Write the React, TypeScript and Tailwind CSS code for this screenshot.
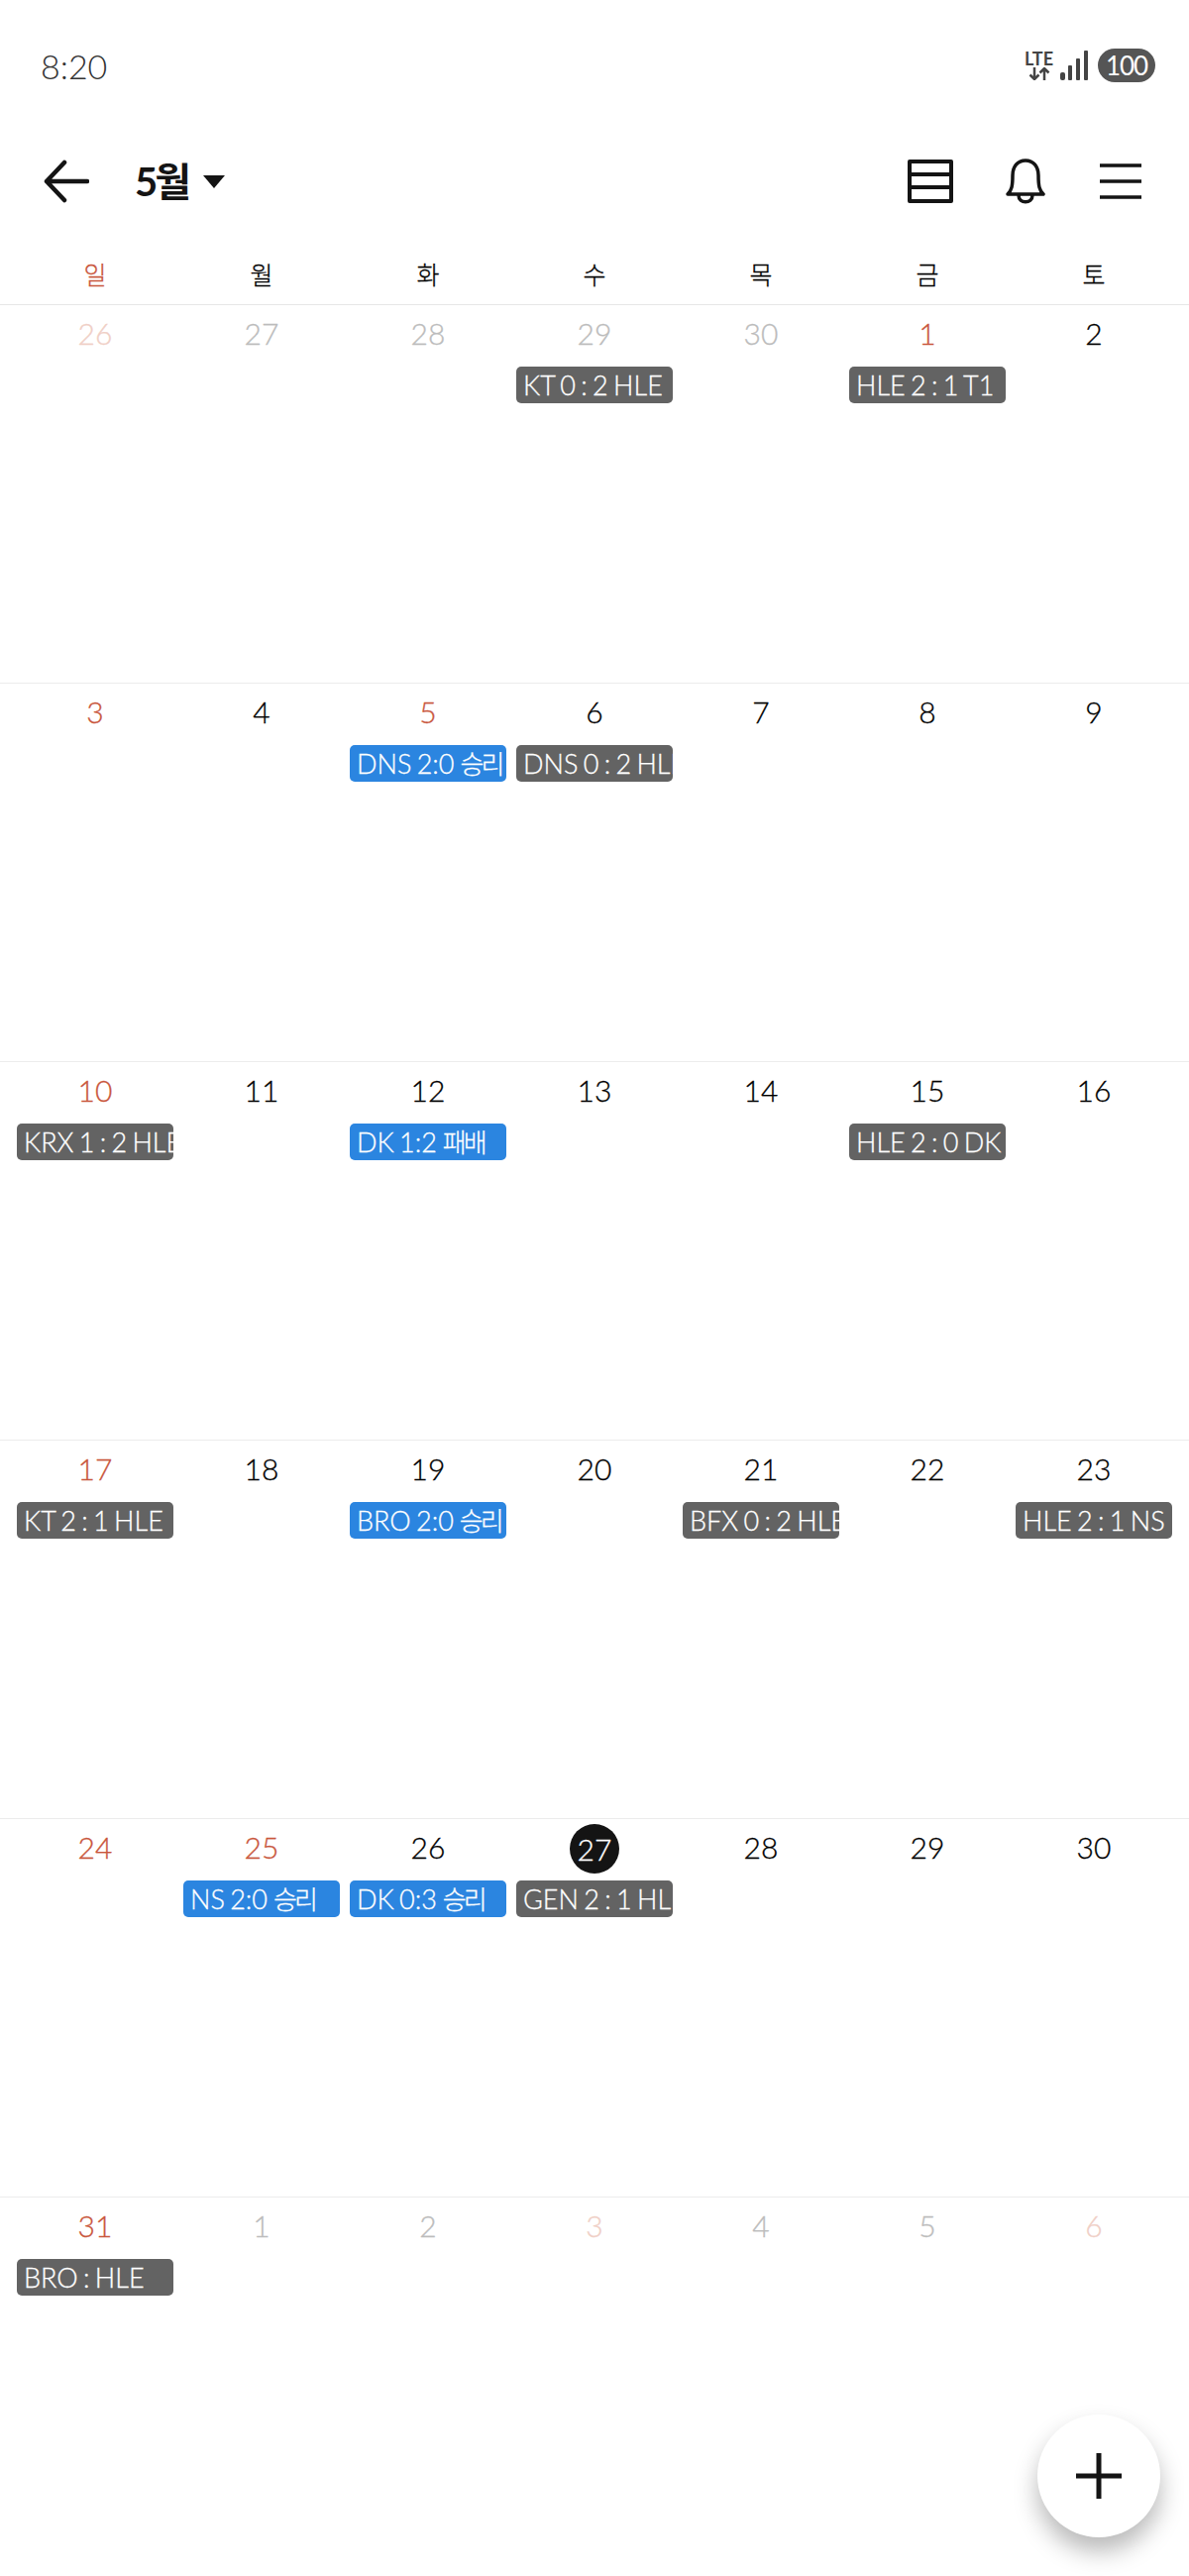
const RED = "text-[#c9563c]";
const PALE = "text-[#f0cfc6]";
const MUTED = "text-[#bcbcbc]";
const BLACK = "text-[#000000]";

type Day = {
  n: number;
  color?: string;
  today?: boolean;
  chip?: string;
  result?: string;
};

const weekdays = ["일", "월", "화", "수", "목", "금", "토"];

const weeks: Day[][] = [
  [
    { n: 26, color: PALE },
    { n: 27, color: MUTED },
    { n: 28, color: MUTED },
    { n: 29, color: MUTED, chip: "KT 0 : 2 HLE" },
    { n: 30, color: MUTED },
    { n: 1, color: RED, chip: "HLE 2 : 1 T1" },
    { n: 2 },
  ],
  [
    { n: 3, color: RED },
    { n: 4 },
    { n: 5, color: RED, chip: "DNS 2:0", result: "승리" },
    { n: 6, chip: "DNS 0 : 2 HLE" },
    { n: 7 },
    { n: 8 },
    { n: 9 },
  ],
  [
    { n: 10, color: RED, chip: "KRX 1 : 2 HLE" },
    { n: 11 },
    { n: 12, chip: "DK 1:2", result: "패배" },
    { n: 13 },
    { n: 14 },
    { n: 15, chip: "HLE 2 : 0 DK" },
    { n: 16 },
  ],
  [
    { n: 17, color: RED, chip: "KT 2 : 1 HLE" },
    { n: 18 },
    { n: 19, chip: "BRO 2:0", result: "승리" },
    { n: 20 },
    { n: 21, chip: "BFX 0 : 2 HLE" },
    { n: 22 },
    { n: 23, chip: "HLE 2 : 1 NS" },
  ],
  [
    { n: 24, color: RED },
    { n: 25, color: RED, chip: "NS 2:0", result: "승리" },
    { n: 26, chip: "DK 0:3", result: "승리" },
    { n: 27, today: true, chip: "GEN 2 : 1 HLE" },
    { n: 28 },
    { n: 29 },
    { n: 30 },
  ],
  [
    { n: 31, color: RED, chip: "BRO : HLE" },
    { n: 1, color: MUTED },
    { n: 2, color: MUTED },
    { n: 3, color: PALE },
    { n: 4, color: MUTED },
    { n: 5, color: MUTED },
    { n: 6, color: PALE },
  ],
];

function DayCell({ day }: { day: Day }) {
  return (
    <div className="min-w-0 flex flex-col items-center">
      <div className="h-[62px] pb-[2px] flex items-center justify-center">
        {day.today ? (
          <div className="w-[50px] h-[50px] rounded-full bg-[#141414] text-white flex items-center justify-center text-[30px] font-light [-webkit-text-stroke:0.3px]">
            {day.n}
          </div>
        ) : (
          <span className={`mb-[3px] text-[30px] font-light [-webkit-text-stroke:0.3px] ${day.color ?? BLACK}`}>
            {day.n}
          </span>
        )}
      </div>
      {day.chip && (
        <div
          className={`w-[158px] h-[37px] rounded-[5px] overflow-hidden whitespace-nowrap pl-[7px] text-white text-[27px] leading-[38px] font-light [word-spacing:-2px] [-webkit-text-stroke:0.3px] ${
            day.result ? "bg-[#2b85e0]" : "bg-[#636363]"
          }`}
        >
          {day.chip}
          {day.result && (
            <span className="ml-[6px] text-[26px] tracking-[-3px]">{day.result}</span>
          )}
        </div>
      )}
    </div>
  );
}

export default function App() {
  return (
    <div className="relative w-[1200px] h-[2600px] overflow-hidden bg-white font-['Lato','Noto_Sans_CJK_KR',sans-serif]">
      {/* 상태바 */}
      <div className="h-[134px] pl-[41px] pr-[34px] pb-[2px] flex items-center justify-between">
        <span className="text-[34px] text-[#333333] font-light">8:20</span>
        <div className="flex items-center gap-[7px]">
          <div className="flex flex-col items-center text-[#444444]">
            <span className="text-[18px] leading-[17px] font-bold">LTE</span>
            <svg width="22" height="13" viewBox="0 0 22 13" fill="none" stroke="#444444" strokeWidth="2.500">
              <path d="M6 0v12M1.500 7.500 6 12l4.500-4.500M16 13V1M11.500 5.500 16 1l4.500 4.500" />
            </svg>
          </div>
          <svg width="28" height="30" viewBox="0 0 28 30" fill="#444444">
            <rect x="0" y="22" width="5" height="8" rx="2" />
            <rect x="8" y="15" width="4" height="15" rx="1" />
            <rect x="16" y="8" width="4" height="22" rx="1" />
            <rect x="24" y="0" width="4" height="30" rx="1" />
          </svg>
          <div className="ml-[3px] w-[58px] h-[34px] rounded-full bg-[#555555] text-white text-[26px] tracking-[-1px] flex items-center justify-center">
            100
          </div>
        </div>
      </div>

      {/* 헤더 */}
      <div className="h-[98px] pl-[44px] pr-[48px] flex items-center justify-between">
        <div className="flex items-center">
          <svg width="46" height="44" viewBox="0 0 46 44" fill="none" stroke="#141414" strokeWidth="4.500" strokeLinecap="round" strokeLinejoin="round">
            <path d="M44 22H3M21 3 3 22l18 19" />
          </svg>
          <span className="ml-[46px] text-[40px] font-bold text-[#141414] tracking-[-3px]">5월</span>
          <svg className="ml-[15px]" width="22" height="13" viewBox="0 0 22 13" fill="#141414">
            <path d="M0 0h22L11 13z" />
          </svg>
        </div>
        <div className="flex items-center gap-[53px]">
          <svg width="46" height="44" viewBox="0 0 46 44" fill="none" stroke="#141414" strokeWidth="4" strokeLinejoin="round">
            <path d="M2 2h42v40H2zM2 15h42M2 28h42" />
          </svg>
          <svg width="40" height="46" viewBox="0 0 40 46" fill="none" stroke="#141414" strokeWidth="3.500" strokeLinejoin="round">
            <path d="M2 36c4-4 5-8 5-19C7 8 12 2 20 2s13 6 13 15c0 11 1 15 5 19zM13 37c0 9 14 9 14 0" />
          </svg>
          <svg className="ml-[2px]" width="42" height="36" viewBox="0 0 42 36" fill="none" stroke="#141414" strokeWidth="3.500">
            <path d="M0 2h42M0 18h42M0 34h42" />
          </svg>
        </div>
      </div>

      {/* 요일 */}
      <div className="h-[76px] px-3 pt-[16px] grid grid-cols-7 items-center border-b border-[#e6e6e6]">
        {weekdays.map((d, i) => (
          <div key={d} className={`text-center text-[25px] font-light [-webkit-text-stroke:0.3px] ${i === 0 ? RED : BLACK}`}>
            {d}
          </div>
        ))}
      </div>

      {/* 달력 */}
      {weeks.map((week, i) => (
        <div
          key={i}
          className={`h-[382px] px-3 grid grid-cols-7 content-start ${
            i < weeks.length - 1 ? "border-b border-[#ececec]" : ""
          }`}
        >
          {week.map((day, j) => (
            <DayCell key={j} day={day} />
          ))}
        </div>
      ))}

      {/* 추가 버튼 */}
      <button className="absolute right-[29px] bottom-[39px] w-[124px] h-[124px] rounded-full bg-white flex items-center justify-center shadow-[0_14px_24px_rgba(0,0,0,0.28)]">
        <svg width="46" height="46" viewBox="0 0 46 46" fill="none" stroke="#141414" strokeWidth="5">
          <path d="M23 0v46M0 23h46" />
        </svg>
      </button>
    </div>
  );
}
